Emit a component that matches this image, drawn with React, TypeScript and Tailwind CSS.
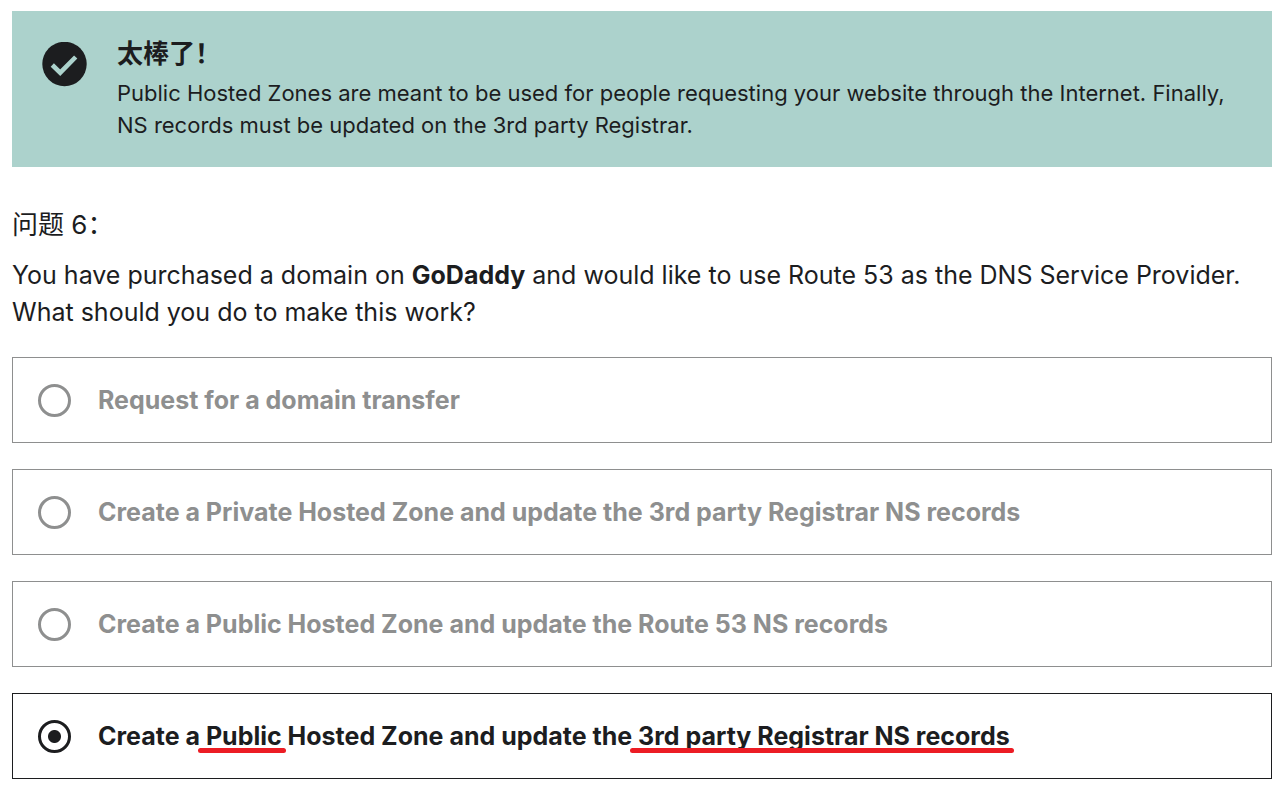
import React, { useState } from "react";

type Option = { id: string; label: React.ReactNode };

function Marked({ children }: { children: React.ReactNode }) {
  return (
    <span className="relative">
      {children}
      <span className="absolute -right-1 -bottom-0.5 -left-2 h-[5px] rounded-full bg-[#ec1c24]" />
    </span>
  );
}

const options: Option[] = [
  { id: "transfer", label: "Request for a domain transfer" },
  { id: "private", label: "Create a Private Hosted Zone and update the 3rd party Registrar NS records" },
  { id: "route53", label: "Create a Public Hosted Zone and update the Route 53 NS records" },
  {
    id: "public",
    label: (
      <>
        Create a <Marked>Public</Marked> Hosted Zone and update the <Marked>3rd party Registrar NS records</Marked>
      </>
    ),
  },
];

export default function App() {
  const [selected, setSelected] = useState("public");
  return (
    <main className="bg-white pt-[11px] pr-3.5 pb-3 pl-3 font-['Inter','Noto_Sans_CJK_SC',sans-serif] text-[#1c1d1f]">
      <section className="flex gap-[30px] bg-[#acd2cc] pt-6 pr-8 pb-[26px] pl-[30px]">
        <svg viewBox="0 0 45 45" className="mt-[7px] size-[45px] shrink-0" aria-hidden="true">
          <circle cx="22.5" cy="22" r="22.2" fill="#1c1d1f" />
          <path d="M10.3 23 L18.2 30.7 L33.7 15" fill="none" stroke="#acd2cc" strokeWidth="4.6" />
        </svg>
        <div>
          <h2 className="mb-1 text-[26px] leading-[38px] font-bold">太棒了！</h2>
          <p className="text-[22px] leading-8">
            Public Hosted Zones are meant to be used for people requesting your website through the Internet. Finally, NS records must be updated on the 3rd party Registrar.
          </p>
        </div>
      </section>
      <form>
        <h1 className="mt-10 text-[26px] leading-9">问题 6：</h1>
        <p className="mt-3.5 text-[25px] leading-[37px]">
          You have purchased a domain on <strong>GoDaddy</strong> and would like to use Route 53 as the DNS Service Provider. What should you do to make this work?
        </p>
        <ul className="mt-[26px] flex flex-col gap-[26px]">
          {options.map((o) => (
            <li key={o.id}>
              <label
                className={
                  "flex min-h-[86px] items-center gap-[27px] border px-[25px] text-[25px] leading-9 font-bold " +
                  (selected === o.id ? "border-[#1c1d1f] text-[#1c1d1f]" : "border-[#8e8f8f] text-[#8e8f8f]")
                }
              >
                <input
                  type="radio"
                  name="answer"
                  checked={selected === o.id}
                  onChange={() => setSelected(o.id)}
                  className="size-[33px] shrink-0 appearance-none rounded-full border-[3px] border-current checked:bg-[radial-gradient(circle,#1c1d1f_6px,transparent_7px)]"
                />
                <span>{o.label}</span>
              </label>
            </li>
          ))}
        </ul>
      </form>
    </main>
  );
}
